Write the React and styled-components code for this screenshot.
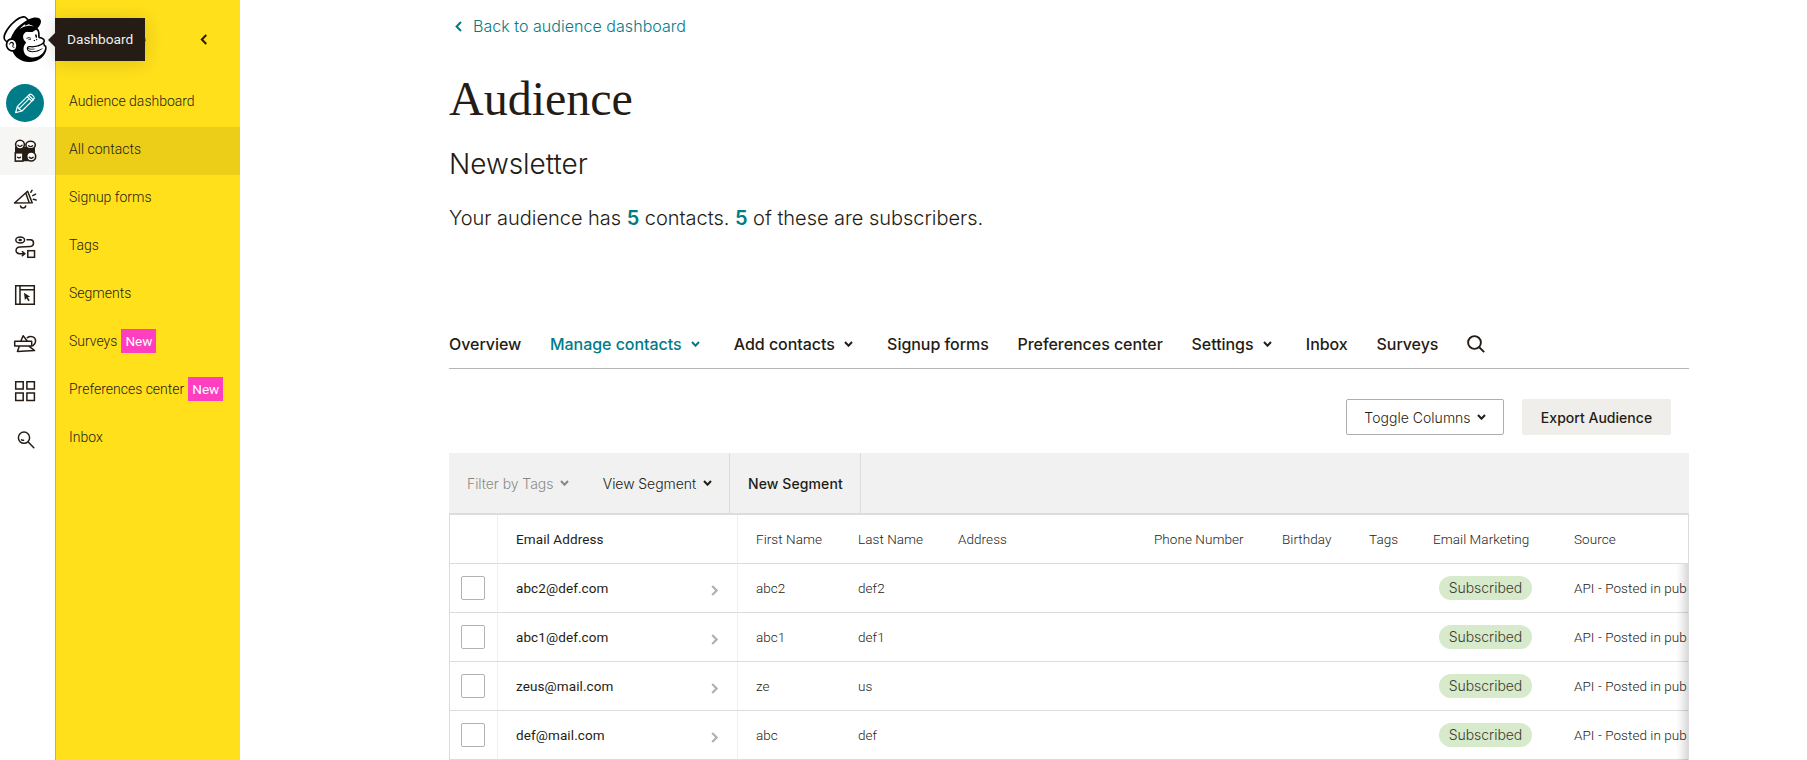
import React from "react";
import styled, { createGlobalStyle } from "styled-components";
import { SiMailchimp } from "react-icons/si";

const ink = "#241c15";
const teal = "#007c89";
const line = "#dcdcdc";
const roboto = `Roboto, "Liberation Sans", sans-serif`;
const inter = `Inter, "Liberation Sans", sans-serif`;

const GlobalStyle = createGlobalStyle`
  * { box-sizing: border-box; }
  body {
    margin: 0;
    overflow: hidden;
    background: #fff;
    color: ${ink};
    font-family: ${roboto};
  }
  a { color: inherit; text-decoration: none; }
  button { font: inherit; color: inherit; background: none; border: 0; padding: 0; }
`;

const Page = styled.div`
  display: flex;
  height: 760px;
  overflow: hidden;
`;

/* Icon rail */

const Rail = styled.nav`
  position: relative;
  z-index: 2;
  display: flex;
  flex-direction: column;
  width: 55px;
  flex: none;
  background: #fff;
`;

const LogoLink = styled.a`
  display: flex;
  align-items: flex-start;
  height: 79px;
  padding: 16px 0 0 2px;

  svg { width: 46px; height: 46px; color: #000; }
`;

const RailItem = styled.a`
  display: flex;
  align-items: center;
  height: 48px;
  padding-left: ${(p) => (p.$round ? "6px" : "13px")};
  background: ${(p) => (p.$active ? "#f6f6f4" : "transparent")};
`;

const Circle = styled.span`
  display: flex;
  align-items: center;
  justify-content: center;
  width: 38px;
  height: 38px;
  border-radius: 50%;
  background: ${teal};
`;

const Tooltip = styled.div`
  position: absolute;
  left: 55px;
  top: 18px;
  width: 90px;
  height: 43px;
  padding: 0 0 2px 12px;
  display: flex;
  align-items: center;
  background: ${ink};
  color: #f1efec;
  font-weight: 450;
  font-size: 13.7px;
  box-shadow: 0 2px 18px rgba(36, 28, 21, 0.16);

  &::before {
    content: "";
    position: absolute;
    left: -7px;
    top: 15px;
    border: solid transparent;
    border-width: 7px 7px 7px 0;
    border-right-color: ${ink};
  }
`;

/* Yellow section menu */

const Sidebar = styled.aside`
  width: 185px;
  flex: none;
  background: #ffe01b;
  border-left: 1px solid #ccb727;
`;

const SidebarHead = styled.div`
  display: flex;
  align-items: center;
  justify-content: space-between;
  height: 79px;
  padding: 0 33px 1px 13px;
  font-weight: 500;
  font-size: 18px;
  letter-spacing: 0.22px;
`;

const MenuItem = styled.a`
  display: flex;
  align-items: center;
  gap: 4px;
  height: 48px;
  padding: 0 0 4px 13px;
  font-weight: 300;
  font-size: 14px;
  background: ${(p) => (p.$active ? "#ecce19" : "transparent")};
`;

const NewBadge = styled.span`
  width: 35px;
  height: 24px;
  line-height: 24px;
  text-align: center;
  background: #ff3ec0;
  color: #fff;
  font-weight: 450;
  font-size: 13.5px;
`;

/* Main area */

const Main = styled.main`
  width: 1240px;
  margin-left: 209px;
  flex: none;
`;

const BackLink = styled.a`
  display: flex;
  align-items: center;
  gap: 11px;
  height: 52px;
  padding-left: 6px;
  color: ${teal};
  font: 300 16px ${inter};
  letter-spacing: 0.04px;
`;

const Title = styled.h1`
  margin: 0;
  padding-top: 19px;
  font: 400 48px/56px "Liberation Serif", serif;
`;

const ListName = styled.h2`
  margin: 0;
  padding-top: 17px;
  font: 300 28px/40px ${inter};
  letter-spacing: -0.05px;
`;

const Summary = styled.p`
  margin: 0;
  padding-top: 19px;
  height: 136px;
  font: 300 20px/30px ${inter};
  letter-spacing: -0.03px;

  b { color: ${teal}; font-weight: 600; }
`;

const Tabs = styled.nav`
  display: flex;
  align-items: center;
  gap: 28.8px;
  height: 49px;
  border-bottom: 1px solid #b5b5b3;
`;

const Tab = styled.a`
  display: flex;
  align-items: center;
  gap: 9.5px;
  color: ${(p) => (p.$active ? teal : ink)};
  font: 450 16px ${inter};
  letter-spacing: -0.05px;
  white-space: nowrap;

  svg { margin-right: 5px; }
`;

const Actions = styled.div`
  display: flex;
  justify-content: flex-end;
  gap: 18px;
  padding: 30px 18px 18px 0;
`;

const Button = styled.button`
  display: flex;
  align-items: center;
  justify-content: center;
  gap: 6px;
  height: 36px;
  width: ${(p) => (p.$filled ? 149 : 158)}px;
  border-radius: 2px;
  border: 1px solid ${(p) => (p.$filled ? "#efeeea" : "#aeaeac")};
  background: ${(p) => (p.$filled ? "#efeeea" : "#fff")};
  font-family: ${inter};
  font-size: 14px;
  font-weight: ${(p) => (p.$filled ? 500 : 300)};
  letter-spacing: 0.02px;
`;

const FilterBar = styled.div`
  display: flex;
  height: 62px;
  background: #f1f1f1;
  border-bottom: 2px solid ${line};
`;

const FilterGroup = styled.div`
  display: flex;
  align-items: center;
  gap: 34px;
  padding: 0 17.5px 0 18px;
  border-right: 1px solid ${line};
`;

const FilterButton = styled.button`
  display: flex;
  align-items: center;
  gap: 6.5px;
  font-family: ${inter};
  font-size: 14px;
  font-weight: ${(p) => (p.$strong ? 450 : 300)};
  letter-spacing: ${(p) => (p.$strong ? 0.1 : -0.07)}px;
  white-space: nowrap;
  color: ${ink};
  opacity: ${(p) => (p.$disabled ? 0.5 : 1)};
`;

/* Contacts table */

const Table = styled.div`
  border: solid ${line};
  border-width: 0 1px;
`;

const Body = styled.div`
  position: relative;
`;

const EdgeShade = styled.div`
  position: absolute;
  top: 0;
  right: 0;
  bottom: 0;
  width: 12px;
  background: linear-gradient(to right, rgba(0, 0, 0, 0), rgba(0, 0, 0, 0.05) 45%, rgba(0, 0, 0, 0.15));
`;

const Row = styled.div`
  display: grid;
  grid-template-columns: 48px 240px 102px 100px 196px 128px 87px 64px 141px 132px;
  height: 49px;
  border-bottom: 1px solid ${line};
  font-weight: 300;
  font-size: 13.5px;
  letter-spacing: 0.06px;
  overflow: hidden;
`;

const Cell = styled.div`
  display: flex;
  align-items: center;
  padding: 0 0 1px 18px;
  white-space: nowrap;
`;

const CheckCell = styled.div`
  display: flex;
  align-items: center;
  padding-left: 11px;
  border-right: 1px solid #efefef;
`;

const EmailCell = styled(Cell)`
  justify-content: space-between;
  padding-right: 19px;
  border-right: 1px solid #efefef;
  font-weight: 450;
  letter-spacing: 0.1px;

  svg { margin-top: 5px; }
`;

const Checkbox = styled.span`
  width: 24px;
  height: 24px;
  border: 1px solid #b5b3b0;
  border-radius: 2px;
`;

const StatusPill = styled.span`
  display: flex;
  align-items: center;
  justify-content: center;
  width: 93px;
  height: 24px;
  margin-left: 6px;
  border-radius: 12px;
  background: #d7eacb;
  font: 350 14px ${inter};
  letter-spacing: -0.05px;
  color: #3d3c30;
`;

/* Icons */

const Chevron = ({ dir = "down", color = "currentColor", w = 9, sw = 2 }) => {
  const down = dir === "down";
  const d = { down: "M1 1l3.5 3.7L8 1", left: "M6 1L1.6 5.5 6 10", right: "M1.2 1l4.4 4.5L1.2 10" }[dir];
  return (
    <svg width={w} height={down ? 6 : 11} viewBox={down ? "0 0 9 6" : "0 0 7 11"} fill="none" stroke={color} strokeWidth={sw}>
      <path d={d} />
    </svg>
  );
};

const Glyph = ({ children, stroke = ink, sw = 1.5 }) => (
  <svg width="24" height="24" viewBox="0 0 24 24" fill="none" stroke={stroke} strokeWidth={sw} strokeLinecap="round">
    {children}
  </svg>
);

const PencilIcon = () => (
  <Glyph stroke="#fff" sw={1.2}>
    <path strokeLinejoin="round" d="M2.6 21.6l1.8-6.2L16 3.8q1.5-1.4 3 0l1.6 1.6q1.4 1.5 0 3L9 20z M14.2 5.6l4.8 4.8M15.6 4.2l4.8 4.8M6 17.9L16.2 7.7M4.4 15.4L6 17.9 9 20" />
  </Glyph>
);

const PeopleIcon = () => (
  <Glyph sw={1.6}>
    <path d="M2 8h20v7h-5l-1.5 7.3h-4L9.5 22H2z" fill={ink} stroke="none" />
    <circle cx="7" cy="5.6" r="4.4" fill="#fff" />
    <ellipse cx="17.6" cy="6" rx="4.7" ry="3.8" fill="#fff" />
    <rect x="2.3" y="13.8" width="7.6" height="8.3" fill="#fff" />
    <circle cx="18.2" cy="17.5" r="4.5" fill="#fff" />
    <path strokeWidth="1.3" d="M4.9 6.3q2.1 2.2 4.2 0M15.6 6.7q2 1.7 4 0M4.6 18.2q1.5 1.3 3 0M16.2 18.3q2 2 4 0" />
  </Glyph>
);

const MegaphoneIcon = () => (
  <Glyph>
    <path strokeLinejoin="round" d="M1.5 16L14.6 4.2l4.6 11.6z M12.8 6l3.4 9.7M7.5 18.9q.3 2 2.6 2t2.6-2M17.8 5.3l1.2-2M19.8 8.6l2.8-1.4M20.4 12.3l2.7.7" />
  </Glyph>
);

const JourneyIcon = () => (
  <Glyph>
    <ellipse cx="7.2" cy="5" rx="4.4" ry="3" />
    <ellipse cx="7.2" cy="5" rx="1" ry=".6" />
    <path d="M14 4.7h3.5c4 0 4 6.6 0 6.7L7 11.9c-5.2.2-5.2 6.7-.4 6.8h4.6M9.4 16.7l2.4 2-2.4 2" />
    <rect x="14.8" y="15.7" width="6.7" height="6.6" strokeLinecap="square" />
  </Glyph>
);

const WebsiteIcon = () => (
  <Glyph>
    <path d="M2.7 2.7h18.6v18.6H2.7zM7 2.7v18.6M7 6.8h14.3" />
    <path d="M11 9.7l6.2 4.1-2.5.5 2 3-1.3.9-1.9-3-1.6 1.9z" fill={ink} stroke="none" />
  </Glyph>
);

const ContentIcon = () => (
  <Glyph>
    <path strokeLinejoin="round" d="M1.7 10.2h17v4.9h-17zM8 9.8l2.1-5 4 5M14.4 6.6c3.6-2.6 8.3-.4 8.2 3.4-.1 2.5-1.3 3.8-2.8 4.8M6.2 15.4l-1.8 5 17.2-.8-5.4-4.2" />
  </Glyph>
);

const GridIcon = () => (
  <Glyph>
    <path d="M2.7 2.7h7.5v7.4H2.7zM13.9 2.7h7.5v7.4h-7.5zM2.7 14h7.5v7.4H2.7zM13.9 14h7.5v7.4h-7.5z" />
  </Glyph>
);

const FindIcon = () => (
  <Glyph>
    <circle cx="11" cy="10.7" r="5.6" />
    <path d="M15.2 15l5.6 5.7M8.6 12.7q.9.9 2 .5" />
  </Glyph>
);

const SearchIcon = () => (
  <svg width="18" height="18" viewBox="0 0 18 18" fill="none" stroke={ink} strokeWidth="1.9">
    <circle cx="7.5" cy="7.5" r="6.4" />
    <path d="M12 12l5.2 5.2" />
  </svg>
);

const railIcons = [
  [PeopleIcon, true],
  [MegaphoneIcon],
  [JourneyIcon],
  [WebsiteIcon],
  [ContentIcon],
  [GridIcon],
  [FindIcon],
];

const menu = [
  { label: "Audience dashboard" },
  { label: "All contacts", active: true },
  { label: "Signup forms" },
  { label: "Tags" },
  { label: "Segments" },
  { label: "Surveys", isNew: true },
  { label: "Preferences center", isNew: true },
  { label: "Inbox" },
];

const tabs = [
  { label: "Overview" },
  { label: "Manage contacts", active: true, more: true },
  { label: "Add contacts", more: true },
  { label: "Signup forms" },
  { label: "Preferences center" },
  { label: "Settings", more: true },
  { label: "Inbox" },
  { label: "Surveys" },
];

const columns = ["First Name", "Last Name", "Address", "Phone Number", "Birthday", "Tags", "Email Marketing", "Source"];

const contacts = [
  { email: "abc2@def.com", first: "abc2", last: "def2" },
  { email: "abc1@def.com", first: "abc1", last: "def1" },
  { email: "zeus@mail.com", first: "ze", last: "us" },
  { email: "def@mail.com", first: "abc", last: "def" },
];

const ContactRow = ({ email, first, last }) => (
  <Row>
    <CheckCell><Checkbox /></CheckCell>
    <EmailCell>
      {email}
      <Chevron dir="right" color="#b3b1ae" w={7} sw={2.2} />
    </EmailCell>
    <Cell>{first}</Cell>
    <Cell>{last}</Cell>
    <Cell />
    <Cell />
    <Cell />
    <Cell />
    <Cell><StatusPill>Subscribed</StatusPill></Cell>
    <Cell>API - Posted in pub</Cell>
  </Row>
);

export default function App() {
  return (
    <Page>
      <GlobalStyle />
      <Rail>
        <LogoLink><SiMailchimp /></LogoLink>
        <RailItem $round><Circle><PencilIcon /></Circle></RailItem>
        {railIcons.map(([Icon, active], i) => (
          <RailItem key={i} $active={active}><Icon /></RailItem>
        ))}
        <Tooltip>Dashboard</Tooltip>
      </Rail>
      <Sidebar>
        <SidebarHead>
          Audience
          <Chevron dir="left" w={7.5} />
        </SidebarHead>
        {menu.map((m) => (
          <MenuItem key={m.label} $active={m.active}>
            {m.label}
            {m.isNew && <NewBadge>New</NewBadge>}
          </MenuItem>
        ))}
      </Sidebar>
      <Main>
        <BackLink><Chevron dir="left" w={7} />Back to audience dashboard</BackLink>
        <Title>Audience</Title>
        <ListName>Newsletter</ListName>
        <Summary>
          Your audience has <b>5</b> contacts. <b>5</b> of these are subscribers.
        </Summary>
        <Tabs>
          {tabs.map((t) => (
            <Tab key={t.label} $active={t.active}>
              {t.label}
              {t.more && <Chevron />}
            </Tab>
          ))}
          <SearchIcon />
        </Tabs>
        <Actions>
          <Button>Toggle Columns <Chevron /></Button>
          <Button $filled>Export Audience</Button>
        </Actions>
        <FilterBar>
          <FilterGroup>
            <FilterButton $disabled>Filter by Tags <Chevron /></FilterButton>
            <FilterButton>View Segment <Chevron /></FilterButton>
          </FilterGroup>
          <FilterGroup>
            <FilterButton $strong>New Segment</FilterButton>
          </FilterGroup>
        </FilterBar>
        <Table>
          <Row>
            <CheckCell />
            <EmailCell>Email Address</EmailCell>
            {columns.map((c) => <Cell key={c}>{c}</Cell>)}
          </Row>
          <Body>
            {contacts.map((c) => <ContactRow key={c.email} {...c} />)}
            <EdgeShade />
          </Body>
        </Table>
      </Main>
    </Page>
  );
}
